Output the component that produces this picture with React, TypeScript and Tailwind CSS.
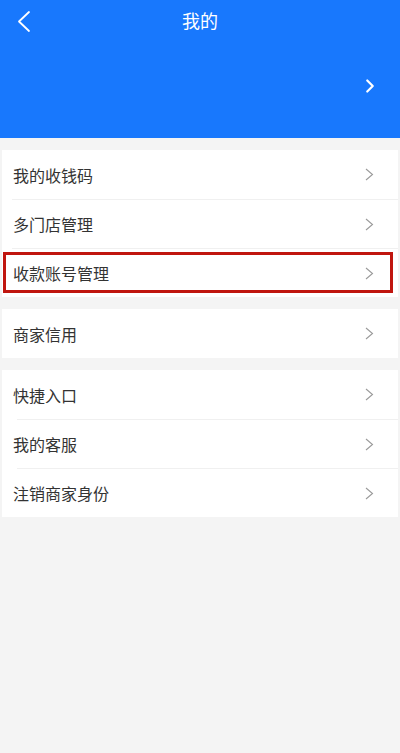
import { ChevronRight } from 'lucide-react';

type Row = { label: string; highlight?: boolean };

const groups: Row[][] = [
  [{ label: '我的收钱码' }, { label: '多门店管理' }, { label: '收款账号管理', highlight: true }],
  [{ label: '商家信用' }],
  [{ label: '快捷入口' }, { label: '我的客服' }, { label: '注销商家身份' }],
];

function Arrow() {
  return (
    <svg width="9" height="13" viewBox="0 0 9 13" className="mr-[24px]">
      <path d="M1 1 L7.5 6.5 L1 12" fill="none" stroke="#9a9a9a" strokeWidth="1.1" />
    </svg>
  );
}

export default function App() {
  return (
    <div
      className="w-[400px] h-[753px] bg-[#f4f4f4] overflow-hidden"
      style={{ fontFamily: '"Noto Sans CJK SC", "Noto Sans", sans-serif' }}
    >
      {/* header */}
      <div className="h-[138px] bg-[#1878fd] relative">
        <div className="h-[40px] flex items-center justify-center">
          <span className="text-white text-[18px] leading-none">我的</span>
        </div>
        <svg className="absolute left-[16px] top-[10px]" width="16" height="24" viewBox="0 0 16 24">
          <path d="M13 2 L3 11.5 L13 21" fill="none" stroke="white" strokeWidth="1.8" strokeLinecap="round" strokeLinejoin="round" />
        </svg>
        <ChevronRight
          className="absolute right-[19px] top-[75px] text-white"
          size={22}
          strokeWidth={2.4}
        />
      </div>

      <div className="pt-[12px] flex flex-col gap-[12px]">
        {groups.map((rows, gi) => (
          <div key={gi} className="mx-[2px] bg-white">
            {rows.map((row, ri) => (
              <div key={row.label} className="relative">
                {ri > 0 && (
                  <div className={`h-px bg-[#f0f0f0] ${gi === 2 ? 'ml-[15px]' : 'ml-[10px]'}`} />
                )}
                <div className={`${ri > 0 ? 'h-[48px]' : 'h-[49px]'} flex items-center justify-between`}>
                  <span className="pl-[11px] text-[16px] text-[#333333]">{row.label}</span>
                  <Arrow />
                </div>
                {row.highlight && (
                  <div className="absolute left-[1px] right-[5px] top-[4px] bottom-[4px] border-[3px] border-[#c0160f]" />
                )}
              </div>
            ))}
          </div>
        ))}
      </div>
    </div>
  );
}
